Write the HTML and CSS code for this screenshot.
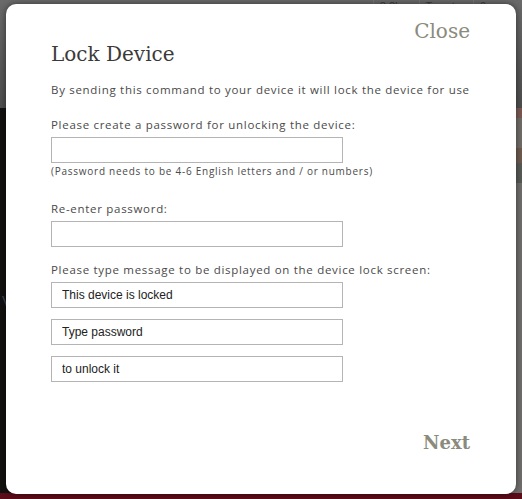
FILE: index.html
```html
<!DOCTYPE html>
<html>
<head>
<meta charset="utf-8">
<link rel="stylesheet" href="styles.css">
</head>
<body>
<div class="page">
  <div class="topband">
    <div class="social"><span class="soc">8.2k</span><span class="soc tweet">Tweet</span><span class="soc">0</span></div>
  </div>
  <div class="main">
    <div class="left-dark"><span class="ghost">V</span></div>
    <div class="right-strip">
      <div class="rs rs1"></div>
      <div class="rs rs2"></div>
      <div class="rs rs3"></div>
      <div class="rs rs4"></div>
    </div>
  </div>
  <div class="bottomband"></div>
</div>

<div class="modal">
  <a class="close" href="#">Close</a>
  <h1 class="title">Lock Device</h1>
  <p class="intro">By sending this command to your device it will lock the device for use</p>

  <label class="label">Please create a password for unlocking the device:</label>
  <input class="field" type="password">
  <p class="hint">(Password needs to be 4-6 English letters and / or numbers)</p>

  <label class="label label-re">Re-enter password:</label>
  <input class="field" type="password">

  <label class="label label-msg">Please type message to be displayed on the device lock screen:</label>
  <div class="msgs">
    <input class="field msg" type="text" value="This device is locked">
    <input class="field msg" type="text" value="Type password">
    <input class="field msg" type="text" value="to unlock it">
  </div>

  <div class="footer"><a class="next" href="#">Next</a></div>
</div>
</body>
</html>
```
FILE: styles.css
```css
html, body {
  margin: 0;
  padding: 0;
}
body {
  width: 522px;
  height: 499px;
  overflow: hidden;
  background: #141311;
  font-family: "Open Sans", sans-serif;
}
.page {
  display: flex;
  flex-direction: column;
  height: 499px;
}
.topband {
  height: 108px;
  background: linear-gradient(#6a6a6a, #555555 70%, #4e4e4e);
  position: relative;
}
.social {
  display: flex;
  justify-content: flex-end;
  gap: 12px;
  padding: 0 30px 0 0;
  font: 11px "Liberation Sans", sans-serif;
  color: #3a3a3a;
}
.soc {
  border-left: 1px solid #777;
  padding: 0 6px;
}
.main {
  flex: 1;
  display: flex;
  justify-content: space-between;
}
.left-dark {
  width: 40px;
  background: #121110;
  display: flex;
  align-items: center;
}
.ghost {
  color: #3d4a60;
  font: 14px "Liberation Sans", sans-serif;
  margin-left: 2px;
}
.right-strip {
  width: 30px;
  background: #6f6e6c;
  display: flex;
  flex-direction: column;
}
.rs1 { height: 10px; background: #7a5a52; }
.rs2 { height: 30px; background: #706c68; }
.rs3 { height: 15px; background: #6e5b50; }
.rs4 { height: 20px; background: #575a55; }
.bottomband {
  height: 6px;
  background: #5c0b18;
}

.modal {
  position: absolute;
  left: 6px;
  top: 4px;
  width: 510px;
  height: 490px;
  box-sizing: border-box;
  background: #fff;
  border-radius: 10px;
  box-shadow: 0 0 6px rgba(0,0,0,0.5);
  padding: 18px 46px 0 45px;
  display: flex;
  flex-direction: column;
  align-items: flex-start;
}
.close {
  align-self: flex-end;
  font-family: "DejaVu Serif", serif;
  font-size: 20px;
  color: #8b8b7d;
  text-decoration: none;
  line-height: 18px;
}
.title {
  margin: 3px 0 0;
  font-family: "DejaVu Serif", serif;
  font-weight: normal;
  font-size: 20px;
  line-height: 22px;
  color: #3c3a39;
}
.intro {
  margin: 18px 0 0;
  font-size: 11.5px;
  line-height: 14px;
  letter-spacing: 0.7px;
  color: #4a4a4a;
}
.label {
  display: block;
  margin-top: 21px;
  font-size: 11.5px;
  line-height: 14px;
  letter-spacing: 0.7px;
  color: #4a4a4a;
}
.label-re { margin-top: 25px; }
.label-msg { margin-top: 16px; }
.field {
  display: block;
  box-sizing: border-box;
  width: 292px;
  height: 26px;
  margin: 5px 0 0;
  padding: 0 10px;
  border: 1px solid #b4b4b4;
  background: #fff;
  font: 12px "Liberation Sans", sans-serif;
  color: #222;
  outline: none;
}
.hint {
  margin: 2px 0 0;
  font-size: 10px;
  line-height: 12px;
  color: #4a4a4a;
  letter-spacing: 0.75px;
}
.msgs {
  display: flex;
  flex-direction: column;
  gap: 11px;
  margin-top: 5px;
}
.msgs .field { margin-top: 0; }
.footer {
  align-self: stretch;
  display: flex;
  justify-content: flex-end;
  margin-top: 50px;
}
.next {
  font-family: "DejaVu Serif", serif;
  font-weight: bold;
  font-size: 18px;
  color: #8b8b7d;
  text-decoration: none;
}
```
